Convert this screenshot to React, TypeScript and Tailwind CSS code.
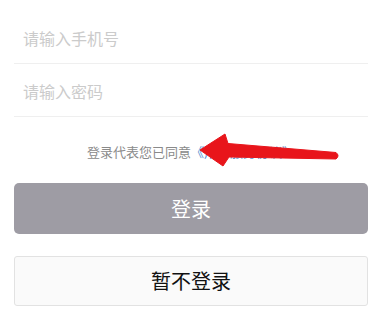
import React from "react";

export default function App() {
  return (
    <div
      className="relative w-[382px] h-[330px] bg-white overflow-hidden"
      style={{ fontFamily: '"Noto Sans CJK SC", "Noto Sans", sans-serif' }}
    >
      <div className="px-[14px] pt-[10px]">
        <div className="h-[54px] border-b border-[#efefef] flex items-center pl-[9px] pt-[2px]">
          <span className="text-[16px] text-[#cbcbcb]">请输入手机号</span>
        </div>
        <div className="h-[53px] border-b border-[#efefef] flex items-center pl-[9px] pt-[2px]">
          <span className="text-[16px] text-[#cbcbcb]">请输入密码</span>
        </div>
        <div className="mt-[24px] h-[20px] flex items-center justify-center text-[13px] leading-none">
          <span className="text-[#8a8a8a]">登录代表您已同意</span>
          <span className="text-[#5a8fcf]">《用户服务协议》</span>
        </div>
        <button className="mt-[22px] w-full h-[51px] rounded-[5px] bg-[#9e9ca4] text-white text-[20px] flex items-center justify-center">
          登录
        </button>
        <button className="mt-[22px] w-full h-[50px] rounded-[3px] bg-[#fafafa] border border-[#e2e2e2] text-[#111] text-[20px] flex items-center justify-center">
          暂不登录
        </button>
      </div>
      <svg
        className="absolute left-0 top-0 pointer-events-none"
        width="382"
        height="330"
        viewBox="0 0 382 330"
      >
        <path
          d="M200 150 L225 134 L228 143.5 L336 152.5 Q340 155.8 336 159 L229 157 L223 166 Z"
          fill="#e8151b"
          stroke="#e8151b"
          strokeWidth="1"
          strokeLinejoin="round"
        />
      </svg>
    </div>
  );
}
